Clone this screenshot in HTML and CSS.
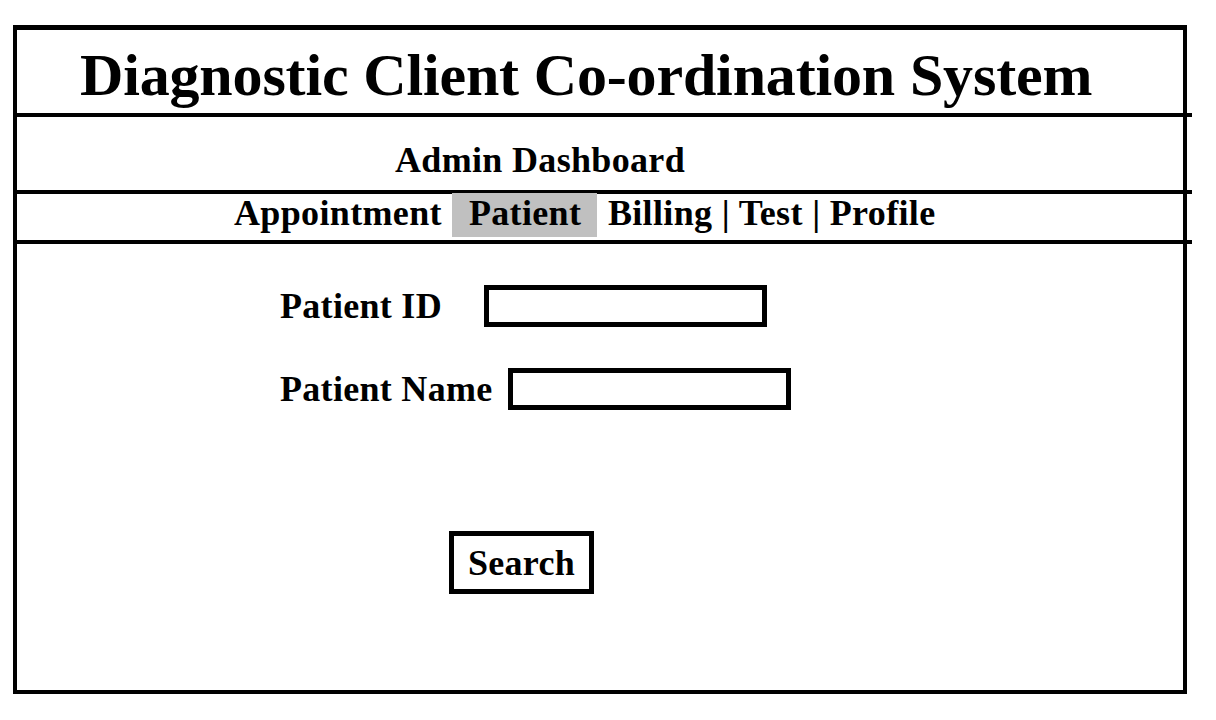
FILE: index.html
```html
<!DOCTYPE html>
<html>
<head>
<meta charset="utf-8">
<title>Diagnostic Client Co-ordination System</title>
<link rel="stylesheet" href="styles.css">
</head>
<body>
<div class="frame">
  <header class="title-row">Diagnostic Client Co-ordination System</header>
  <div class="divider"></div>
  <div class="sub-row">Admin Dashboard</div>
  <div class="divider"></div>
  <nav class="nav-row">
    <span class="nav-item">Appointment</span>
    <span class="nav-item active">Patient</span>
    <span class="nav-item">Billing | Test | Profile</span>
  </nav>
  <div class="divider"></div>
  <main class="body">
    <div class="form-row row-id">
      <label class="label">Patient ID</label>
      <div class="field"></div>
    </div>
    <div class="form-row row-name">
      <label class="label">Patient Name</label>
      <div class="field"></div>
    </div>
    <div class="button-row">
      <button class="search-btn">Search</button>
    </div>
  </main>
</div>
</body>
</html>
```

FILE: styles.css
```css
* { box-sizing: border-box; }

html, body {
  margin: 0;
  padding: 0;
  background: #ffffff;
}

body {
  font-family: "Liberation Serif", "Times New Roman", serif;
  font-weight: bold;
  color: #000;
}

.frame {
  width: 1174px;
  height: 669px;
  margin: 25px 0 0 13px;
  border-style: solid;
  border-color: #000;
  border-width: 5px 4px 4px 4px;
  display: flex;
  flex-direction: column;
}

.title-row {
  height: 83px;
  padding: 15px 0 0 63px;
  font-size: 60px;
  line-height: 60px;
  letter-spacing: -0.16px;
  white-space: nowrap;
}

.divider {
  height: 4px;
  background: #000;
  margin-right: -9px;
  flex: none;
}

.sub-row {
  height: 73px;
  padding: 25px 0 0 378px;
  font-size: 36px;
  line-height: 36px;
  letter-spacing: 0.33px;
}

.nav-row {
  height: 46px;
  display: flex;
  align-items: flex-start;
  padding-left: 217px;
  font-size: 36px;
  letter-spacing: 0.35px;
}

.nav-item {
  height: 44px;
  margin-top: -1px;
  line-height: 40px;
  white-space: nowrap;
}

.nav-item.active {
  background: #c0c0c0;
  width: 145px;
  padding: 0 0 0 17px;
  margin: -1px 11px 0 10px;
}

.body {
  flex: 1;
  padding: 41px 0 0 263px;
  font-size: 36px;
  letter-spacing: 0.3px;
}

.form-row {
  display: flex;
  align-items: center;
  height: 42px;
}

.row-name {
  margin-top: 41px;
}

.label {
  line-height: 36px;
  white-space: nowrap;
}

.field {
  width: 283px;
  height: 42px;
  border: 5px solid #000;
  background: #fff;
}

.row-id .field { margin-left: 42px; }
.row-name .field { margin-left: 15px; }

.button-row {
  margin-top: 121px;
  padding-left: 169px;
}

.search-btn {
  width: 145px;
  height: 63px;
  border: 5px solid #000;
  background: #fff;
  font-family: "Liberation Serif", "Times New Roman", serif;
  font-weight: bold;
  font-size: 36px;
  line-height: 36px;
  letter-spacing: 0.3px;
  color: #000;
  padding: 0;
  display: flex;
  align-items: center;
  justify-content: center;
}
```
